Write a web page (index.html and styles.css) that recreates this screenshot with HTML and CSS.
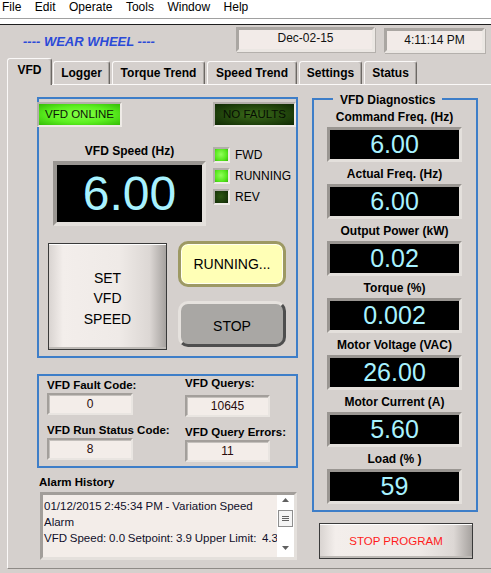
FILE: index.html
```html
<!DOCTYPE html>
<html>
<head>
<meta charset="utf-8">
<link rel="stylesheet" href="styles.css">
</head>
<body>
<div class="menubar">
  <span>File</span><span>Edit</span><span>Operate</span><span>Tools</span><span>Window</span><span>Help</span>
</div>
<div class="menu-sep"></div>
<div class="header">
  <div class="title">---- WEAR WHEEL ----</div>
  <div class="datebox">Dec-02-15</div>
  <div class="timebox">4:11:14 PM</div>
</div>
<div class="tabs">
  <div class="tab active tab-vfd">VFD</div>
  <div class="tab tab-logger">Logger</div>
  <div class="tab tab-torque">Torque Trend</div>
  <div class="tab tab-speed">Speed Trend</div>
  <div class="tab tab-settings">Settings</div>
  <div class="tab tab-status">Status</div>
</div>
<div class="panel">
  <div class="left-col">
    <div class="group vfd-group">
      <div class="status-row">
        <div class="lamp lamp-on">VFD ONLINE</div>
        <div class="lamp lamp-off">NO FAULTS</div>
      </div>
      <div class="speed-row">
        <div class="speed-col">
          <div class="label">VFD Speed (Hz)</div>
          <div class="display display-big">6.00</div>
        </div>
        <div class="leds">
          <div class="led-row"><span class="led on"></span><span>FWD</span></div>
          <div class="led-row"><span class="led on"></span><span>RUNNING</span></div>
          <div class="led-row"><span class="led off"></span><span>REV</span></div>
        </div>
      </div>
      <div class="button-row">
        <button class="btn-set">SET<br>VFD<br>SPEED</button>
        <div class="btn-stack">
          <button class="btn-running">RUNNING...</button>
          <button class="btn-stop">STOP</button>
        </div>
      </div>
    </div>
    <div class="group counters">
      <div class="counter-col left">
        <div class="counter-label">VFD Fault Code:</div>
        <div class="counter-box">0</div>
        <div class="counter-label second">VFD Run Status Code:</div>
        <div class="counter-box">8</div>
      </div>
      <div class="counter-col right">
        <div class="counter-label">VFD Querys:</div>
        <div class="counter-box">10645</div>
        <div class="counter-label second">VFD Query Errors:</div>
        <div class="counter-box">11</div>
      </div>
    </div>
    <div class="alarm-label">Alarm History</div>
    <div class="listbox">
      <div class="list-text">01/12/2015 2:45:34 PM - Variation Speed<br>Alarm<br>VFD Speed: 0.0 Setpoint: 3.9 Upper Limit:&nbsp; 4.3</div>
      <div class="scrollbar">
        <svg class="arrow-up" width="7" height="4" viewBox="0 0 7 4"><path d="M0 4 L3.5 0 L7 4 Z" fill="#606060"/></svg>
        <svg class="thumb" width="15" height="17" viewBox="0 0 15 17"><rect x="0.5" y="0.5" width="14" height="16" fill="#f4f4f4" stroke="#8e8e8e"/><path d="M4 6.5 H11 M4 8.5 H11 M4 10.5 H11" stroke="#606060" stroke-width="1"/></svg>
        <svg class="arrow-down" width="7" height="4" viewBox="0 0 7 4"><path d="M0 0 L3.5 4 L7 0 Z" fill="#606060"/></svg>
      </div>
    </div>
  </div>
  <div class="right-col">
    <fieldset class="diag">
      <legend>VFD Diagnostics</legend>
      <div class="diag-item"><div class="label">Command Freq. (Hz)</div><div class="display">6.00</div></div>
      <div class="diag-item"><div class="label">Actual Freq. (Hz)</div><div class="display">6.00</div></div>
      <div class="diag-item"><div class="label">Output Power (kW)</div><div class="display">0.02</div></div>
      <div class="diag-item"><div class="label">Torque (%)</div><div class="display">0.002</div></div>
      <div class="diag-item"><div class="label">Motor Voltage (VAC)</div><div class="display">26.00</div></div>
      <div class="diag-item"><div class="label">Motor Current (A)</div><div class="display">5.60</div></div>
      <div class="diag-item"><div class="label">Load (% )</div><div class="display">59</div></div>
    </fieldset>
    <button class="btn-stop-program">STOP PROGRAM</button>
  </div>
</div>
</body>
</html>
```
FILE: styles.css
```css
html, body {
  margin: 0;
  padding: 0;
}
body {
  width: 491px;
  height: 573px;
  overflow: hidden;
  background: #d5d0cd;
  font-family: "Liberation Sans", Arial, sans-serif;
  color: #000;
}

/* menu */
.menubar {
  height: 18px;
  background: #fff;
  border-bottom: 1px solid #a0a0a0;
  display: flex;
  gap: 13.5px;
  padding-left: 2px;
  font-size: 12px;
  line-height: 14px;
  color: #000;
}
.menu-sep {
  height: 5px;
  background: #fff;
  border-bottom: 1px solid #1e1e1e;
}

/* header */
.header {
  height: 33px;
  display: flex;
  align-items: flex-start;
  padding: 0 6px 0 23px;
}
.title {
  margin-top: 9px;
  font-size: 13px;
  line-height: 15px;
  font-weight: bold;
  font-style: italic;
  color: #2b4ad8;
}
.datebox, .timebox {
  box-sizing: border-box;
  height: 25px;
  background: #f2ebe8;
  border: 3px solid;
  border-color: #aaa6a2 #ebe7e3 #ebe7e3 #aaa6a2;
  box-shadow: 1px 1px 0 #b4b0ac;
  font-size: 12px;
  text-align: center;
  color: #111;
}
.datebox {
  margin-left: auto;
  margin-top: 2px;
  width: 139px;
  line-height: 17px;
}
.timebox {
  margin-left: 9px;
  margin-top: 3px;
  width: 101px;
  line-height: 19px;
}

/* tabs */
.tabs {
  height: 26px;
  display: flex;
  align-items: flex-end;
  gap: 2px;
  padding-left: 7px;
}
.tab {
  box-sizing: border-box;
  height: 23px;
  font-size: 12px;
  font-weight: bold;
  line-height: 22px;
  text-align: center;
  background: #d5d0cd;
  border: 1px solid;
  border-bottom: none;
  border-color: #fbf9f8 #6c6864 transparent #fbf9f8;
  border-radius: 3px 3px 0 0;
  box-shadow: inset -1px 0 #a9a5a1;
  white-space: nowrap;
}
.tab.active {
  height: 27px;
  margin-bottom: -1px;
  margin-right: -1px;
  line-height: 23px;
  position: relative;
  z-index: 1;
}
.tab-vfd { width: 45px; }
.tab-logger { width: 57px; }
.tab-torque { width: 93px; }
.tab-speed { width: 90px; }
.tab-settings { width: 63px; }
.tab-status { width: 53px; }

/* panel */
.panel {
  box-sizing: border-box;
  height: 485px;
  margin-left: 7px;
  border-top: 1px solid #fbf9f8;
  border-left: 1px solid #fbf9f8;
  border-bottom: 1px solid #8e8a86;
  display: flex;
  align-items: flex-start;
  gap: 14px;
  padding-left: 29px;
}
.left-col {
  width: 261px;
  margin-top: 12px;
}
.right-col {
  width: 166px;
  margin-top: 7px;
}

.group {
  box-sizing: border-box;
  border: 2px solid #3e7ec8;
}
.vfd-group {
  height: 261px;
}
.status-row {
  display: flex;
  justify-content: space-between;
  margin: 3px 0 0 -2px;
}
.lamp {
  box-sizing: border-box;
  height: 25px;
  border: 2px solid;
  border-color: #b4b0ac #eeeae6 #eeeae6 #b4b0ac;
  font-size: 11.5px;
  line-height: 21px;
  text-align: center;
}
.lamp-on {
  width: 85px;
  background: radial-gradient(ellipse at 50% 50%, #86ff48 0%, #5cf020 55%, #34bc06 100%);
  color: #0c1806;
}
.lamp-off {
  width: 83px;
  background: radial-gradient(ellipse at 50% 50%, #3c6c1a 0%, #21440c 60%, #102a04 100%);
  color: #060e03;
}

.label {
  font-size: 11.5px;
  font-weight: bold;
  line-height: 15px;
  text-align: center;
  white-space: nowrap;
}
.speed-row {
  display: flex;
  margin: 17px 0 0 14px;
}
.speed-col {
  width: 153px;
}
.speed-col .label {
  margin-bottom: 2px;
  font-size: 12px;
}
.display {
  box-sizing: border-box;
  background: #000;
  color: #a8f2ff;
  border: 3px solid;
  border-color: #9a9692 #e4e0dc #e4e0dc #9a9692;
  text-align: center;
  font-family: "Liberation Sans", Arial, sans-serif;
}
.display-big {
  height: 65px;
  border-width: 4px;
  font-size: 48px;
  line-height: 57px;
}
.leds {
  margin: 3px 0 0 7px;
  display: flex;
  flex-direction: column;
  gap: 5px;
}
.led-row {
  display: flex;
  align-items: center;
  height: 16px;
  font-size: 12px;
  color: #000;
}
.led {
  box-sizing: border-box;
  width: 17px;
  height: 16px;
  margin-right: 5px;
  border: 2px solid;
  border-color: #b2aeaa #efebe7 #efebe7 #b2aeaa;
}
.led.on {
  background: radial-gradient(circle at 45% 45%, #92ff5a 0%, #58e81e 60%, #36b80a 100%);
}
.led.off {
  background: radial-gradient(circle at 45% 45%, #2e5814 0%, #1a380a 70%, #0e2404 100%);
}

button {
  font-family: "Liberation Sans", Arial, sans-serif;
  padding: 0;
  margin: 0;
  color: #000;
}
.button-row {
  display: flex;
  align-items: flex-start;
  margin: 15px 0 0 9px;
}
.btn-set {
  box-sizing: border-box;
  width: 119px;
  height: 107px;
  margin-top: 2px;
  padding-top: 4px;
  border: 1px solid #3a3a3a;
  background: linear-gradient(to right, #d9d4d1 0%, #f3eeeb 12%, #efeae7 60%, #dcd7d4 86%, #a6a29f 100%);
  box-shadow: inset 0 1px 0 #fff, inset 0 -2px 0 #bdb9b5;
  font-size: 14px;
  line-height: 20.5px;
}
.btn-stack {
  margin-left: 11px;
  display: flex;
  flex-direction: column;
  gap: 14px;
}
.btn-running, .btn-stop {
  box-sizing: border-box;
  width: 108px;
  height: 46px;
  border-radius: 10px;
  font-size: 14px;
}
.btn-running {
  background: #ffffb6;
  border: 3px solid #9d9963;
  box-shadow: inset 0 0 0 1px #fffff2;
}
.btn-stop {
  background: #a9a7a4;
  border: 3px solid;
  border-color: #e6e2de #4e4e4e #4e4e4e #e6e2de;
  padding-top: 3px;
}

/* counters */
.counters {
  height: 94px;
  margin-top: 16px;
  display: flex;
  padding-left: 8px;
}
.counter-col.left {
  width: 138px;
  padding-top: 2px;
}
.counter-col.right {
  width: 100px;
}
.counter-label {
  font-size: 11.5px;
  font-weight: bold;
  line-height: 14px;
  white-space: nowrap;
}
.counter-label.second {
  margin-top: 8px;
}
.counter-box {
  box-sizing: border-box;
  width: 86px;
  height: 22px;
  margin-top: 1px;
  background: #f3ede9;
  border: 2px solid;
  border-color: #a39f9b #e9e5e1 #e9e5e1 #a39f9b;
  box-shadow: inset 1px 1px 0 #c4c0bc;
  text-align: center;
  font-size: 12px;
  line-height: 19px;
  color: #2a0c0c;
}
.counter-col.right .counter-box {
  width: 85px;
}
.counter-col.right .counter-box:nth-child(2) {
  margin-top: 5px;
}

/* alarm */
.alarm-label {
  margin-top: 7px;
  padding-left: 2px;
  font-size: 11.5px;
  font-weight: bold;
  line-height: 15px;
}
.listbox {
  box-sizing: border-box;
  display: flex;
  width: 257px;
  height: 68px;
  margin: 2px 0 0 3px;
  background: #f3ede9;
  border: 3px solid;
  border-color: #a29e9a #e4e0dc #e4e0dc #a29e9a;
}
.list-text {
  flex: 1;
  min-width: 0;
  overflow: hidden;
  white-space: nowrap;
  padding: 3px 0 0 1px;
  font-size: 11.5px;
  line-height: 16px;
  word-spacing: -0.4px;
  color: #10102a;
}
.scrollbar {
  width: 17px;
  flex: none;
  background: #fff;
  display: flex;
  flex-direction: column;
  align-items: center;
}
.arrow-up {
  margin-top: 3px;
}
.thumb {
  margin-top: 8px;
}
.arrow-down {
  margin-top: auto;
  margin-bottom: 7px;
}

/* diagnostics */
.diag {
  box-sizing: border-box;
  width: 166px;
  min-width: 0;
  margin: 0;
  padding: 3px 14px 6px 13px;
  border: 2px solid #3e7ec8;
}
.diag legend {
  margin-left: 6px;
  padding: 2px 7px 0;
  font-size: 12px;
  font-weight: bold;
  line-height: 12px;
}
.diag-item + .diag-item {
  margin-top: 4px;
}
.diag-item .label {
  font-size: 12px;
  line-height: 16px;
}
.diag-item .display {
  height: 35px;
  margin-top: 2px;
  font-size: 25px;
  line-height: 29px;
}
.btn-stop-program {
  box-sizing: border-box;
  display: block;
  width: 154px;
  height: 36px;
  margin: 11px 0 0 7px;
  border: 1px solid #3a3a3a;
  background: linear-gradient(to right, #d9d4d1 0%, #f3eeeb 10%, #efeae7 65%, #dcd7d4 88%, #a6a29f 100%);
  box-shadow: inset 0 1px 0 #fff, inset 0 -2px 0 #bdb9b5;
  font-size: 11.5px;
  color: #ff1c1c;
}
```
